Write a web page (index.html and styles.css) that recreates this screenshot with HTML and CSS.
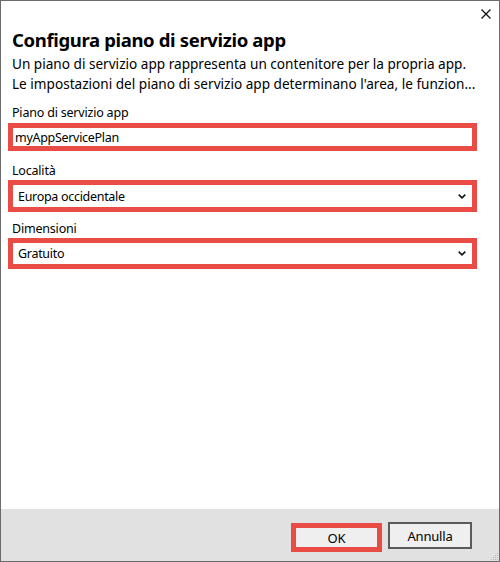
FILE: index.html
```html
<!DOCTYPE html>
<html lang="it">
<head>
<meta charset="utf-8">
<title>Configura piano di servizio app</title>
<link rel="stylesheet" href="styles.css">
</head>
<body>
<div class="window">
  <div class="titlebar">
    <svg class="close" width="10" height="10" viewBox="0 0 10 10"><path d="M0.5 0.5 L9.5 9.5 M9.5 0.5 L0.5 9.5" stroke="#111" stroke-width="1.3" fill="none"/></svg>
  </div>
  <div class="content">
    <h1 class="title">Configura piano di servizio app</h1>
    <p class="desc">Un piano di servizio app rappresenta un contenitore per la propria app.</p>
    <p class="desc">Le impostazioni del piano di servizio app determinano l'area, le funzion...</p>
    <div class="field field-plan">
      <div class="label">Piano di servizio app</div>
      <div class="box box-text"><span>myAppServicePlan</span></div>
    </div>
    <div class="field field-loc">
      <div class="label">Località</div>
      <div class="box box-select box-loc"><span>Europa occidentale</span>
        <svg class="chev" width="8" height="5" viewBox="0 0 8 5"><path d="M0.7 0.7 L4 3.8 L7.3 0.7" stroke="#111" stroke-width="1.6" fill="none"/></svg>
      </div>
    </div>
    <div class="field field-size">
      <div class="label">Dimensioni</div>
      <div class="box box-select box-size"><span>Gratuito</span>
        <svg class="chev" width="8" height="5" viewBox="0 0 8 5"><path d="M0.7 0.7 L4 3.8 L7.3 0.7" stroke="#111" stroke-width="1.6" fill="none"/></svg>
      </div>
    </div>
  </div>
  <div class="footer">
    <div class="btn btn-ok">OK</div>
    <div class="btn btn-cancel">Annulla</div>
    <svg class="grip" width="10" height="10" viewBox="0 0 10 10">
      <rect x="8" y="2" width="1" height="1" fill="#b9b9b9"/>
      <rect x="6" y="4" width="1" height="1" fill="#b9b9b9"/>
      <rect x="8" y="4" width="1" height="1" fill="#b9b9b9"/>
      <rect x="4" y="6" width="1" height="1" fill="#b9b9b9"/>
      <rect x="6" y="6" width="1" height="1" fill="#b9b9b9"/>
      <rect x="8" y="6" width="1" height="1" fill="#b9b9b9"/>
      <rect x="2" y="8" width="1" height="1" fill="#b9b9b9"/>
      <rect x="4" y="8" width="1" height="1" fill="#b9b9b9"/>
      <rect x="6" y="8" width="1" height="1" fill="#b9b9b9"/>
      <rect x="8" y="8" width="1" height="1" fill="#b9b9b9"/>
    </svg>
  </div>
</div>
</body>
</html>
```
FILE: styles.css
```css
* { box-sizing: border-box; }
html, body { margin: 0; padding: 0; background: #fff; }
body { font-family: "Noto Sans", "Open Sans", sans-serif; color: #000; }
.window {
  width: 500px;
  height: 562px;
  border: 1px solid #6b6b6b;
  display: flex;
  flex-direction: column;
  background: #fff;
}
.titlebar {
  height: 26px;
  display: flex;
  justify-content: flex-end;
  align-items: flex-start;
  padding: 8px 8px 0 0;
}
.close { display: block; }
.content {
  flex: 1;
  padding: 0 22px 0 7px;
}
.title {
  margin: 0 0 0 4px;
  font-size: 18.5px;
  line-height: 26px;
  font-weight: 700;
  letter-spacing: -0.35px;
}
.title + .desc { margin-top: 1px; }
.desc {
  margin: 0 0 0 4px;
  font-size: 13.6px;
  line-height: 20px;
  white-space: nowrap;
}
.field { display: flex; flex-direction: column; }
.label {
  font-size: 12.5px;
  line-height: 17px;
  padding-left: 4px;
  letter-spacing: -0.2px;
}
.field-plan { margin-top: 10px; }
.field-plan .label { margin-bottom: 2px; }
.field-loc { margin-top: 11px; }
.field-loc .label { margin-bottom: 1px; }
.field-size { margin-top: 8px; }
.field-size .label { margin-bottom: 1px; }
.box {
  border: 5px solid #e84c45;
  background: #fff;
  display: flex;
  align-items: center;
  font-size: 12.5px;
  letter-spacing: -0.3px;
}
.box-text { height: 28px; padding-left: 2px; }
.box-select { justify-content: space-between; padding: 0 5px 0 5px; }
.box-loc { height: 32px; }
.box-size { height: 31px; }
.chev { display: block; margin-right: 1px; }
.footer {
  height: 52px;
  background: #e1e1e1;
  display: flex;
  justify-content: flex-end;
  align-items: flex-start;
  padding: 13px 27px 0 0;
  position: relative;
}
.btn {
  display: flex;
  align-items: center;
  justify-content: center;
  font-size: 13px;
  background: #efefef;
  letter-spacing: -0.2px;
}
.btn-ok {
  width: 91px;
  height: 29px;
  border: 5px solid #e84c45;
  margin-top: 1px;
  margin-right: 6px;
}
.btn-cancel {
  width: 84px;
  height: 27px;
  border: 2px solid #5a5a5a;
}
.grip { position: absolute; right: 0; bottom: 0; }
```
